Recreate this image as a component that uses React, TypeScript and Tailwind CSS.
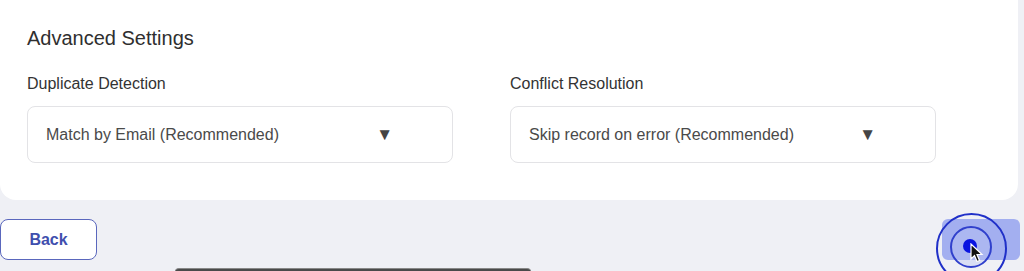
import { ReactNode } from 'react'

interface SelectBoxProps {
  label: string
  value: string
}

function SelectBox({ label, value }: SelectBoxProps) {
  return (
    <div>
      <div className="text-[16px] leading-5 text-[#333333]">{label}</div>
      <div className="mt-3 flex h-[57px] items-center justify-between rounded-lg border border-[#e3e3e6] bg-white pl-[18px] pr-[59px]">
        <span className="text-[16px] text-[#4a4a4a]">{value}</span>
        <span className="text-[17px] leading-none text-[#444444]">▼</span>
      </div>
    </div>
  )
}

function ClickRipple({ children }: { children?: ReactNode }) {
  return (
    <div className="pointer-events-none absolute left-[936px] top-[213px] h-[71px] w-[71px]">
      <div className="absolute inset-0 rounded-full border-2 border-[#2030c8]" />
      <div className="absolute left-[14px] top-[13px] h-[42px] w-[42px] rounded-full border-2 border-[#3040cc] bg-[#b8c2f2]/40" />
      <div className="absolute left-[27px] top-[26px] h-[14px] w-[14px] rounded-full bg-[#0a14e0]" />
      {children}
    </div>
  )
}

export default function App() {
  return (
    <div
      className="relative h-[271px] w-[1024px] overflow-hidden bg-[#eff0f5]"
      style={{ fontFamily: '"Liberation Sans", Arial, sans-serif' }}
    >
      {/* Settings card */}
      <div className="h-[200px] w-[1018px] rounded-b-2xl bg-white pl-[27px] pt-6">
        <h2 className="text-[20px] leading-7 text-[#2f2f2f]">Advanced Settings</h2>
        <div className="mt-[22px] grid w-[909px] grid-cols-2 gap-[57px]">
          <SelectBox label="Duplicate Detection" value="Match by Email (Recommended)" />
          <SelectBox label="Conflict Resolution" value="Skip record on error (Recommended)" />
        </div>
      </div>

      {/* Footer actions */}
      <div className="mt-[19px] flex w-[1020px] items-center justify-between">
        <button className="h-[41px] w-[97px] rounded-lg border-[1.5px] border-[#5a67bd] bg-white text-[16px] font-bold text-[#3f4fae]">
          Back
        </button>
        <button className="h-[41px] w-[78px] rounded-md bg-[#a3aff0]" />
      </div>

      {/* bottom bar */}
      <div className="absolute left-[175px] top-[268px] h-[6px] w-[356px] rounded-t border-t border-[#888] bg-[#4a4a4a]" />

      <ClickRipple>
        <svg className="absolute left-[34px] top-[30px]" width="14" height="20" viewBox="0 0 14 20">
          <path d="M1 1 L1 16 L4.5 12.5 L7 18.5 L9.5 17.5 L7 11.5 L12 11.5 Z" fill="#111" stroke="#fff" strokeWidth="1.2" />
        </svg>
      </ClickRipple>
    </div>
  )
}
